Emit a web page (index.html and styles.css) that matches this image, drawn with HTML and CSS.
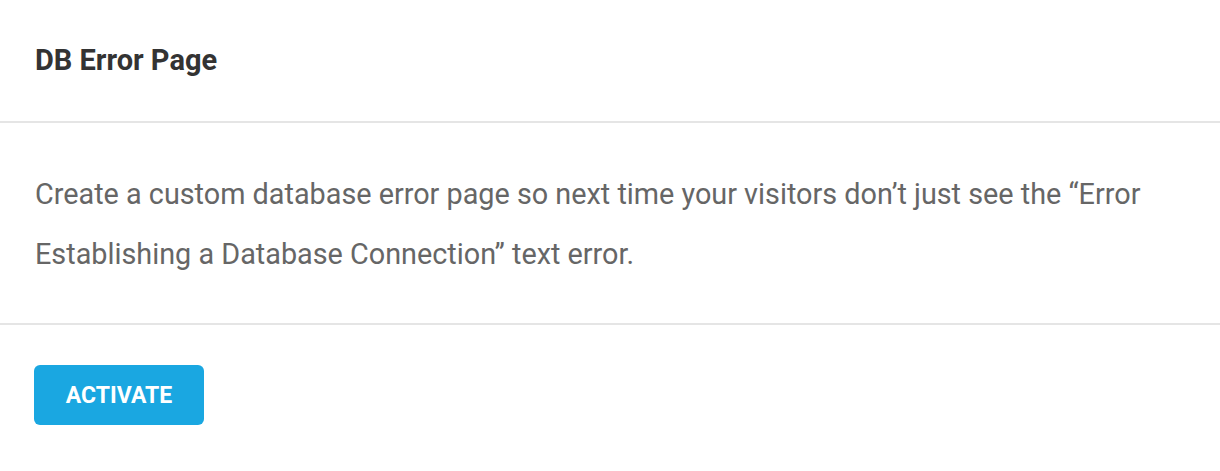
FILE: index.html
```html
<!DOCTYPE html>
<html lang="en">
<head>
  <meta charset="UTF-8" />
  <meta name="viewport" content="width=device-width, initial-scale=1.0"/>
  <title>DB Error Page</title>
  <link rel="stylesheet" href="styles.css">
</head>
<body>
  <div class="card">
    <div class="card-header">
      <h2>DB Error Page</h2>
    </div>

    <div class="card-body">
      <p>Create a custom database error page so next time your visitors don’t just see the “Error Establishing a Database Connection” text error.</p>
    </div>

    <div class="card-footer">
      <button type="button" class="btn-activate">Activate</button>
    </div>
  </div>
</body>
</html>
```

FILE: styles.css
```css
* {
  margin: 0;
  padding: 0;
  box-sizing: border-box;
  font-family: Roboto, 'Liberation Sans', sans-serif;
}

body {
  background-color: #fff;
}

.card {
  width: 1220px;
}

.card-header {
  height: 123px;
  padding: 0 35px 2px;
  display: flex;
  align-items: center;
  border-bottom: 2px solid #e5e5e5;
}

.card-header h2 {
  font-size: 29px;
  font-weight: 700;
  color: #333;
}

.card-body {
  padding: 41px 35px 39px;
  border-bottom: 2px solid #e5e5e5;
}

.card-body p {
  font-size: 28.8px;
  line-height: 60px;
  color: #666;
}

.card-footer {
  padding: 40px 34px;
}

.btn-activate {
  width: 170px;
  height: 60px;
  background-color: #1aa7e1;
  color: white;
  border: none;
  border-radius: 6px;
  font-size: 23px;
  font-weight: 700;
  text-transform: uppercase;
  cursor: pointer;
}
```
